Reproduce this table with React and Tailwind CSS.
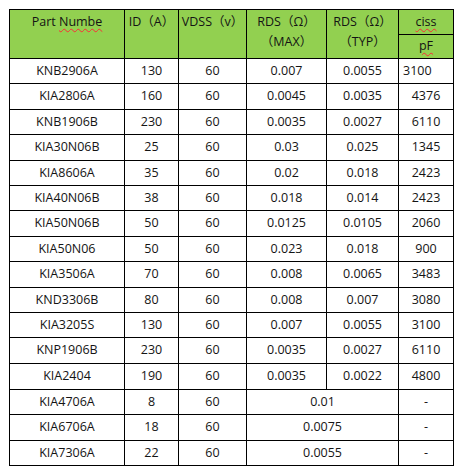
const rows = [
  ["KNB2906A", "130", "60", "0.007", "0.0055", "3100", 24, "left"],
  ["KIA2806A", "160", "60", "0.0045", "0.0035", "4376", 25],
  ["KNB1906B", "230", "60", "0.0035", "0.0027", "6110", 24],
  ["KIA30N06B", "25", "60", "0.03", "0.025", "1345", 25],
  ["KIA8606A", "35", "60", "0.02", "0.018", "2423", 24],
  ["KIA40N06B", "38", "60", "0.018", "0.014", "2423", 24],
  ["KIA50N06B", "50", "60", "0.0125", "0.0105", "2060", 25],
  ["KIA50N06", "50", "60", "0.023", "0.018", "900", 24],
  ["KIA3506A", "70", "60", "0.008", "0.0065", "3483", 25],
  ["KND3306B", "80", "60", "0.008", "0.007", "3080", 24],
  ["KIA3205S", "130", "60", "0.007", "0.0055", "3100", 24],
  ["KNP1906B", "230", "60", "0.0035", "0.0027", "6110", 25],
  ["KIA2404", "190", "60", "0.0035", "0.0022", "4800", 25],
];

// rows where MAX/TYP share one cell
const merged = [
  ["KIA4706A", "8", "60", "0.01", 24],
  ["KIA6706A", "18", "60", "0.0075", 25],
  ["KIA7306A", "22", "60", "0.0055", 24],
];

const cell = "bg-white flex items-center justify-center";
const head = "bg-[#92d050] flex flex-col items-center pt-[2px] leading-[20px]";
const squiggle = "underline decoration-wavy decoration-red-500 decoration-1 underline-offset-2";

export default function App() {
  return (
    <div className="w-[462px] h-[473px] bg-white pt-[8px] pl-[9px]">
      <div
        className="inline-grid gap-px p-px bg-black text-[#141414] text-[12.5px] grid-cols-[114px_53px_67px_79px_71px_54px]"
        style={{
          fontFamily: "'Open Sans', 'Noto Sans CJK SC', sans-serif",
          gridTemplateRows:
            "24px 23px " +
            rows.map((r) => r[6] + "px").join(" ") +
            " " +
            merged.map((r) => r[4] + "px").join(" "),
        }}
      >
        {/* header */}
        <div className={`${head} row-span-2`}>
          <span>
            Part <span className={squiggle}>Numbe</span>
          </span>
        </div>
        <div className={`${head} row-span-2`}>
          <span>ID（A）</span>
        </div>
        <div className={`${head} row-span-2`}>
          <span>VDSS（v）</span>
        </div>
        <div className={`${head} row-span-2`}>
          <span>RDS（Ω）</span>
          <span>（MAX）</span>
        </div>
        <div className={`${head} row-span-2`}>
          <span>RDS（Ω）</span>
          <span>（TYP）</span>
        </div>
        <div className="bg-[#92d050] flex items-center justify-center">
          <span className={squiggle}>ciss</span>
        </div>
        <div className="bg-[#92d050] flex items-center justify-center col-start-6">
          <span className={squiggle}>pF</span>
        </div>

        {/* data */}
        {rows.map((r) => (
          <Row key={r[0]} r={r} />
        ))}
        {merged.map((r) => (
          <MergedRow key={r[0]} r={r} />
        ))}
      </div>
    </div>
  );
}

function Row({ r }) {
  return (
    <>
      <div className={cell}>{r[0]}</div>
      <div className={cell}>{r[1]}</div>
      <div className={cell}>{r[2]}</div>
      <div className={cell}>{r[3]}</div>
      <div className={cell}>{r[4]}</div>
      {r[7] === "left" ? (
        <div className="bg-white flex items-center pl-[4px]">{r[5]}</div>
      ) : (
        <div className={cell}>{r[5]}</div>
      )}
    </>
  );
}

function MergedRow({ r }) {
  return (
    <>
      <div className={cell}>{r[0]}</div>
      <div className={cell}>{r[1]}</div>
      <div className={cell}>{r[2]}</div>
      <div className={`${cell} col-span-2`}>{r[3]}</div>
      <div className={cell}>-</div>
    </>
  );
}
